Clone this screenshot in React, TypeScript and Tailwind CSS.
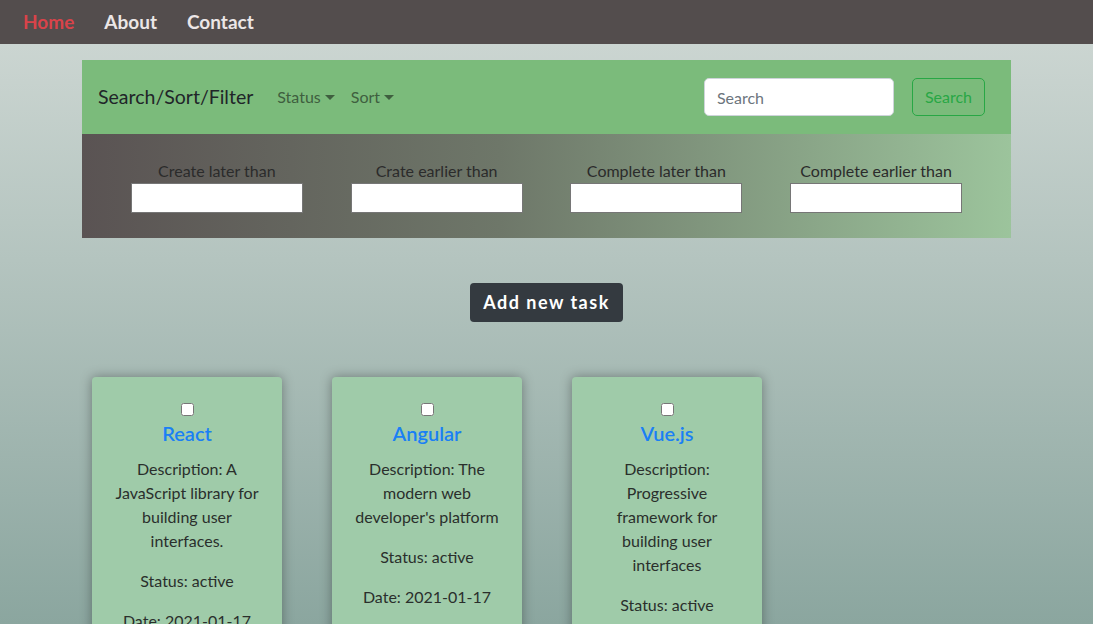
const tasks = [
  {
    id: 1,
    name: "React",
    description: "A JavaScript library for building user interfaces.",
    status: "active",
    date: "2021-01-17",
  },
  {
    id: 2,
    name: "Angular",
    description: "The modern web developer's platform",
    status: "active",
    date: "2021-01-17",
  },
  {
    id: 3,
    name: "Vue.js",
    description: "Progressive framework for building user interfaces",
    status: "active",
    date: "2021-01-17",
  },
];

const dateFilters = [
  "Create later than",
  "Crate earlier than",
  "Complete later than",
  "Complete earlier than",
];

function Caret() {
  return (
    <span className="ml-[4px] inline-block h-0 w-0 border-x-[5px] border-t-[5px] border-x-transparent border-t-current align-[3px]" />
  );
}

function TaskCard({ task }: { task: (typeof tasks)[number] }) {
  return (
    <div className="w-[190px] rounded-[4px] bg-[#9fcba9] px-5 pt-5 pb-4 text-center shadow-[0_0_12px_rgba(0,0,0,0.35)]">
      <div className="flex h-6 items-center justify-center">
        <input type="checkbox" className="h-[13px] w-[13px]" />
      </div>
      <h5 className="mb-3 text-[20px] leading-6 font-semibold text-[#1a7ff5]">{task.name}</h5>
      <p className="mb-4 text-[16px] leading-6 text-[#2a2f2c]">Description: {task.description}</p>
      <p className="mb-4 text-[16px] leading-6 text-[#2a2f2c]">Status: {task.status}</p>
      <p className="mb-4 text-[16px] leading-6 text-[#2a2f2c]">Date: {task.date}</p>
    </div>
  );
}

export default function App() {
  return (
    <div className="min-h-[624px] bg-[linear-gradient(to_bottom,#cbd5d1_45px,#b4c4bf_260px,#8ba69f_624px)] font-['Lato',sans-serif] text-[#212529]">
      <nav className="flex h-[44px] items-center gap-[30px] bg-[#534d4d] px-[23px] text-[19px] font-bold">
        <a className="text-[#d9434a]">Home</a>
        <a className="text-[#ebe6e6]">About</a>
        <a className="text-[#ebe6e6]">Contact</a>
      </nav>

      <div className="mx-[82px] mt-[16px]">
        <div className="flex h-[74px] items-center bg-[#7bbb7b] pr-[26px] pl-[16px]">
          <span className="mr-[16px] text-[19.5px] text-[#212529]">Search/Sort/Filter</span>
          <span className="px-[8px] text-[16px] text-[#3f5f3f]">
            Status
            <Caret />
          </span>
          <span className="px-[8px] text-[16px] text-[#3f5f3f]">
            Sort
            <Caret />
          </span>
          <div className="ml-auto flex items-center gap-[18px]">
            <input
              placeholder="Search"
              className="h-[38px] w-[190px] rounded-[5px] border border-[#ced4da] bg-white px-[12px] text-[16px] text-[#495057] placeholder:text-[#6c757d]"
            />
            <button className="h-[38px] rounded-[5px] border border-[#28a745] px-[12px] text-[16px] text-[#28a745]">
              Search
            </button>
          </div>
        </div>
        <div className="grid grid-cols-4 bg-[linear-gradient(to_right,#5a5353,#6e7769_45%,#9cc49c)] px-[25px] py-[25px]">
          {dateFilters.map((label) => (
            <label key={label} className="flex flex-col items-center">
              <span className="text-[16px] leading-6 text-[#2b2b2b]">{label}</span>
              <input className="h-[30px] w-[172px] border border-[#767676] bg-white" />
            </label>
          ))}
        </div>
      </div>

      <div className="mt-[45px] flex justify-center">
        <button className="h-[39px] rounded-[4px] bg-[#343a40] px-[13px] text-[18px] font-bold tracking-[1.5px] text-white">
          Add new task
        </button>
      </div>

      <div className="mx-[92px] mt-[55px] flex items-start gap-[50px]">
        {tasks.map((task) => (
          <TaskCard key={task.id} task={task} />
        ))}
      </div>
    </div>
  );
}
